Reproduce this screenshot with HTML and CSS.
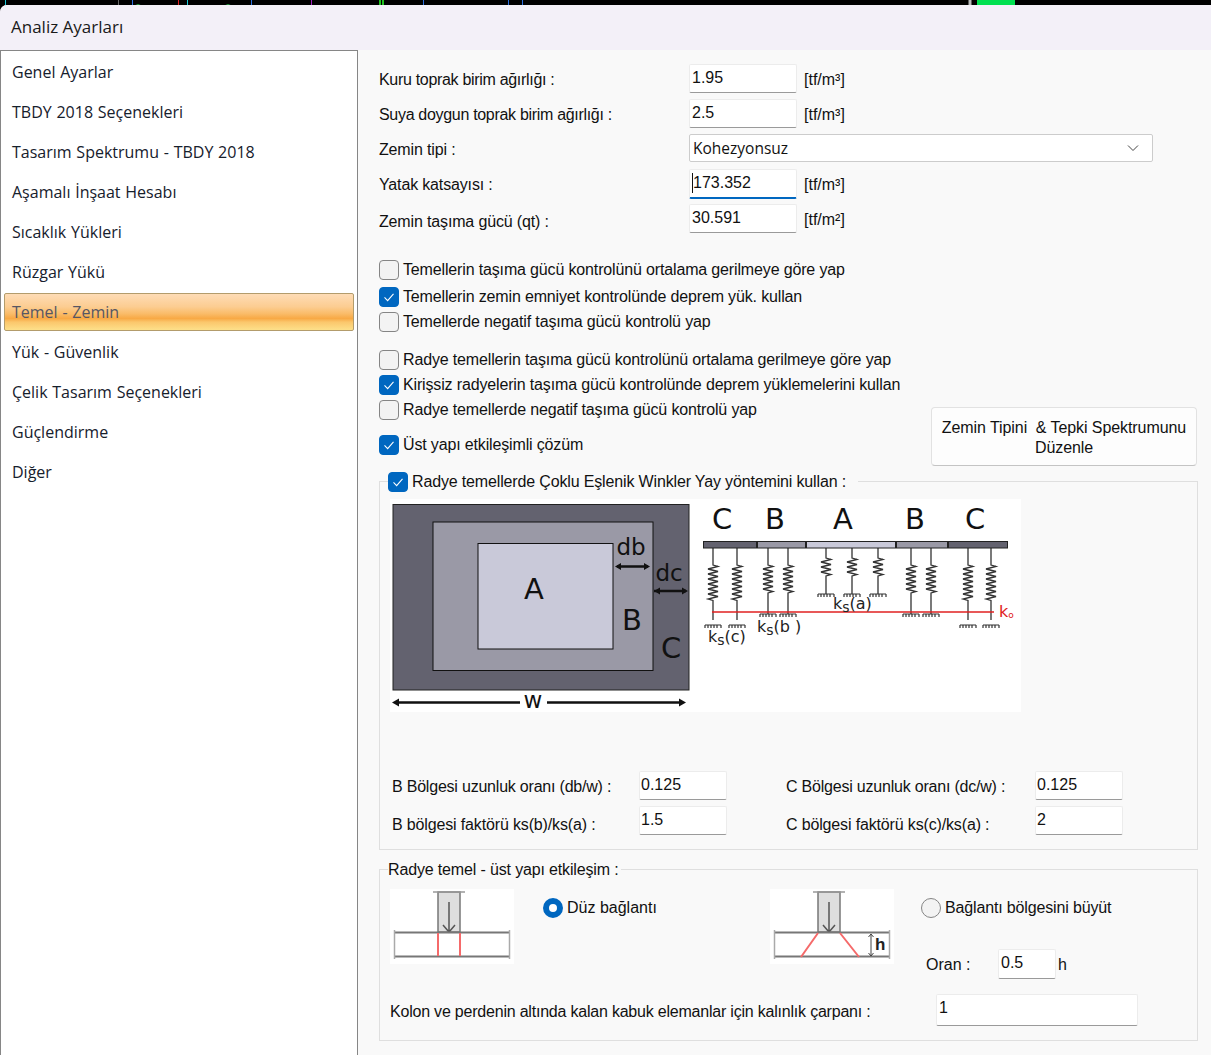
FILE: index.html
```html
<!DOCTYPE html>
<html lang="tr">
<head>
    <meta charset="UTF-8">
    <meta name="viewport" content="width=device-width, initial-scale=1.0">
    <title>Analiz Ayarları</title>
    <link rel="stylesheet" href="styles.css">
</head>
<body>
    <svg class="strip" width="1211" height="5" viewBox="0 0 1211 5">
        <path d="M5.500 0v5" stroke="#19c8d8"/>
        <path d="M118.500 0v5" stroke="#666"/>
        <path d="M132.500 0v5" stroke="#2a6fe0"/>
        <path d="M178.500 0v5" stroke="#e02020"/>
        <path d="M187.500 0v5" stroke="#19c8d8"/>
        <path d="M251.500 0v5" stroke="#2a6fe0"/>
        <path d="M311.500 0v5" stroke="#a020c0"/>
        <path d="M380 0v5M383 0v5" stroke="#20c020" stroke-width="2"/>
        <path d="M134 6q4-3 8 0M224 6q4-3 8 0" stroke="#20a040" fill="none"/>
        <path d="M423.500 0v5M508.500 0v5M522.500 0v5" stroke="#2a6fe0"/>
        <path d="M970 0v5" stroke="#bbb" stroke-width="3"/>
        <rect x="977" width="38" height="5" fill="#00e050"/>
    </svg>

    <div class="dialog">
        <div class="titlebar">Analiz Ayarları</div>
        <div class="dialog-body">
            <ul class="sidebar">
                <li class="side-item">Genel Ayarlar</li>
                <li class="side-item">TBDY 2018 Seçenekleri</li>
                <li class="side-item">Tasarım Spektrumu - TBDY 2018</li>
                <li class="side-item">Aşamalı İnşaat Hesabı</li>
                <li class="side-item">Sıcaklık Yükleri</li>
                <li class="side-item">Rüzgar Yükü</li>
                <li class="side-item active">Temel - Zemin</li>
                <li class="side-item">Yük - Güvenlik</li>
                <li class="side-item">Çelik Tasarım Seçenekleri</li>
                <li class="side-item">Güçlendirme</li>
                <li class="side-item">Diğer</li>
            </ul>

            <div class="content">
                <div class="soil-form">
                    <div class="form-row">
                        <span class="form-label tight">Kuru toprak birim ağırlığı :</span>
                        <div class="field field-main">1.95</div>
                        <span class="unit">[tf/m³]</span>
                    </div>
                    <div class="form-row">
                        <span class="form-label tight">Suya doygun toprak birim ağırlığı :</span>
                        <div class="field field-main">2.5</div>
                        <span class="unit">[tf/m³]</span>
                    </div>
                    <div class="form-row">
                        <span class="form-label">Zemin tipi :</span>
                        <div class="combo">
                            <span>Kohezyonsuz</span>
                            <svg width="12" height="8" viewBox="0 0 12 8"><path d="M1 1.500l5 5 5-5" fill="none" stroke="#444" stroke-width="1"/></svg>
                        </div>
                    </div>
                    <div class="form-row">
                        <span class="form-label">Yatak katsayısı :</span>
                        <div class="field field-main focused"><span class="caret"></span>173.352</div>
                        <span class="unit">[tf/m³]</span>
                    </div>
                    <div class="form-row">
                        <span class="form-label label-low">Zemin taşıma gücü (qt) :</span>
                        <div class="field field-main">30.591</div>
                        <span class="unit">[tf/m²]</span>
                    </div>
                </div>

                <div class="options">
                    <div class="check-list">
                        <label class="check check-loose"><span class="box"></span>Temellerin taşıma gücü kontrolünü ortalama gerilmeye göre yap</label>
                        <label class="check"><span class="box on"><svg viewBox="0 0 20 20"><path d="M5 10.500l3.500 3.500 6.500-7.500"/></svg></span>Temellerin zemin emniyet kontrolünde deprem yük. kullan</label>
                        <label class="check"><span class="box"></span>Temellerde negatif taşıma gücü kontrolü yap</label>
                        <label class="check check-sep"><span class="box"></span>Radye temellerin taşıma gücü kontrolünü ortalama gerilmeye göre yap</label>
                        <label class="check"><span class="box on"><svg viewBox="0 0 20 20"><path d="M5 10.500l3.500 3.500 6.500-7.500"/></svg></span>Kirişsiz radyelerin taşıma gücü kontrolünde deprem yüklemelerini kullan</label>
                        <label class="check"><span class="box"></span>Radye temellerde negatif taşıma gücü kontrolü yap</label>
                        <label class="check check-last"><span class="box on"><svg viewBox="0 0 20 20"><path d="M5 10.500l3.500 3.500 6.500-7.500"/></svg></span>Üst yapı etkileşimli çözüm</label>
                    </div>
                    <div class="spectrum-btn">Zemin Tipini &nbsp;&amp; Tepki Spektrumunu Düzenle</div>
                </div>

                <fieldset class="group group-winkler">
                    <legend class="group-legend">
                        <label class="check"><span class="box on"><svg viewBox="0 0 20 20"><path d="M5 10.500l3.500 3.500 6.500-7.500"/></svg></span>Radye temellerde Çoklu Eşlenik Winkler Yay yöntemini kullan :</label>
                    </legend>

                    <svg class="winkler-img" width="631" height="213" viewBox="390 499 631 213">
                        <defs>
                            <path id="zig-long" d="M0 0v17l5 1.500-10 2.500 10 2.500-10 2.500 10 2.500-10 2.500 10 2.500-10 2.500 10 2.500-10 2.500 10 2.500-10 2.500 10 2.500-10 2.500 5 1.500v19.500" fill="none" stroke="#333" stroke-width="1.300"/>
                            <path id="zig-mid" d="M0 0v17l5 1.500-10 2.500 10 2.500-10 2.500 10 2.500-10 2.500 10 2.500-10 2.500 10 2.500-10 2.500 10 2.500-5 1.500v21" fill="none" stroke="#333" stroke-width="1.300"/>
                            <path id="zig-short" d="M0 0v10l5 1.500-10 2.500 10 2.500-10 2.500 10 2.500-10 2.500 10 2.500-5 1.500v18" fill="none" stroke="#333" stroke-width="1.300"/>
                            <path id="ground" d="M-8 0h16M-8 0v3M-5 0v3M-2 0v3M1 0v3M4 0v3M8 0v3" fill="none" stroke="#333" stroke-width="1.200"/>
                        </defs>
                        <rect x="390" y="499" width="631" height="213" fill="#fff"/>

                        <rect x="393" y="504.500" width="296" height="185.500" fill="#63626f" stroke="#222" stroke-width="1"/>
                        <rect x="433" y="522" width="220" height="148.500" fill="#9a99a6" stroke="#111" stroke-width="1"/>
                        <rect x="478" y="543.500" width="135" height="105.500" fill="#c9c9d9" stroke="#111" stroke-width="1"/>
                        <text class="dia-big" x="534" y="599" text-anchor="middle">A</text>
                        <text class="dia-big" x="632" y="630" text-anchor="middle">B</text>
                        <text class="dia-big" x="671" y="658" text-anchor="middle">C</text>
                        <text class="dia-mid" x="631" y="555" text-anchor="middle">db</text>
                        <text class="dia-mid" x="669" y="581" text-anchor="middle">dc</text>
                        <path d="M617 566.500h31M654 591h32M396 702.500h124M547 702.500h136" stroke="#111" stroke-width="2.500" fill="none"/>
                        <path d="M615 566.500l6-3.500v7zM650 566.500l-6-3.500v7zM654 591l6-3.500v7zM688 591l-6-3.500v7zM392 702.500l7-4v8zM686 702.500l-7-4v8z" fill="#111"/>
                        <text class="dia-mid" x="533" y="708" text-anchor="middle">w</text>

                        <text class="dia-big" x="722" y="529" text-anchor="middle">C</text>
                        <text class="dia-big" x="775" y="529" text-anchor="middle">B</text>
                        <text class="dia-big" x="843" y="529" text-anchor="middle">A</text>
                        <text class="dia-big" x="915" y="529" text-anchor="middle">B</text>
                        <text class="dia-big" x="975" y="529" text-anchor="middle">C</text>

                        <use href="#zig-long" x="713" y="548"/>
                        <use href="#zig-long" x="737" y="548"/>
                        <use href="#zig-mid" x="768" y="548"/>
                        <use href="#zig-mid" x="788" y="548"/>
                        <use href="#zig-short" x="826" y="548"/>
                        <use href="#zig-short" x="852" y="548"/>
                        <use href="#zig-short" x="878" y="548"/>
                        <use href="#zig-mid" x="911" y="548"/>
                        <use href="#zig-mid" x="931" y="548"/>
                        <use href="#zig-long" x="968" y="548"/>
                        <use href="#zig-long" x="991" y="548"/>
                        <use href="#ground" x="713" y="625"/>
                        <use href="#ground" x="737" y="625"/>
                        <use href="#ground" x="768" y="614"/>
                        <use href="#ground" x="788" y="614"/>
                        <use href="#ground" x="826" y="594"/>
                        <use href="#ground" x="852" y="594"/>
                        <use href="#ground" x="878" y="594"/>
                        <use href="#ground" x="911" y="614"/>
                        <use href="#ground" x="931" y="614"/>
                        <use href="#ground" x="968" y="625"/>
                        <use href="#ground" x="991" y="625"/>

                        <rect x="703" y="541" width="305" height="7.500" fill="#222"/>
                        <rect x="704" y="542" width="52" height="5.500" fill="#63626f"/>
                        <rect x="758" y="542" width="47" height="5.500" fill="#9a99a6"/>
                        <rect x="807" y="542" width="88" height="5.500" fill="#c9c9d9"/>
                        <rect x="897" y="542" width="50" height="5.500" fill="#9a99a6"/>
                        <rect x="949" y="542" width="58" height="5.500" fill="#63626f"/>
                        <path d="M712 612h282" stroke="#e02020" stroke-width="1.300"/>

                        <text class="dia-small" x="708" y="642">k<tspan class="dia-sub" dy="3">s</tspan><tspan dy="-3">(c)</tspan></text>
                        <text class="dia-small" x="757" y="632">k<tspan class="dia-sub" dy="3">s</tspan><tspan dy="-3">(b )</tspan></text>
                        <text class="dia-small" x="833" y="609">k<tspan class="dia-sub" dy="3">s</tspan><tspan dy="-3">(a)</tspan></text>
                        <text class="dia-small dia-red" x="999" y="617">k<tspan class="dia-sub-o" dy="1">o</tspan></text>
                    </svg>

                    <div class="ratio-grid">
                        <span class="form-label tight-soft">B Bölgesi uzunluk oranı (db/w) :</span>
                        <div class="field">0.125</div>
                        <span class="form-label tight-soft">C Bölgesi uzunluk oranı (dc/w) :</span>
                        <div class="field">0.125</div>
                        <span class="form-label label-low">B bölgesi faktörü ks(b)/ks(a) :</span>
                        <div class="field">1.5</div>
                        <span class="form-label label-low">C bölgesi faktörü ks(c)/ks(a) :</span>
                        <div class="field">2</div>
                    </div>
                </fieldset>

                <fieldset class="group group-link">
                    <legend class="group-legend plain">Radye temel - üst yapı etkileşim :</legend>

                    <div class="link-row">
                        <svg class="link-img" width="124" height="75" viewBox="0 0 124 75">
                            <rect width="124" height="75" fill="#fff"/>
                            <rect x="48" y="3" width="22" height="40" fill="#dedede" stroke="#777" stroke-width="1.500"/>
                            <path d="M43 3h32" stroke="#999" stroke-width="1.500"/>
                            <path d="M59 13v29M53 36l6 7 6-7" fill="none" stroke="#555" stroke-width="1.500"/>
                            <path d="M4 43.500h116M4 67.500h116" stroke="#777" stroke-width="2"/>
                            <path d="M4.500 41v29M119.500 41v29" stroke="#aaa" stroke-width="1.500"/>
                            <path d="M48 44v23M70 44v23" stroke="#f56a6a" stroke-width="2"/>
                        </svg>
                        <label class="radio radio-flat"><span class="dot on"></span>Düz bağlantı</label>
                        <svg class="link-img img-grow" width="124" height="75" viewBox="0 0 124 75">
                            <rect width="124" height="75" fill="#fff"/>
                            <rect x="48" y="3" width="22" height="40" fill="#dedede" stroke="#777" stroke-width="1.500"/>
                            <path d="M43 3h32" stroke="#999" stroke-width="1.500"/>
                            <path d="M59 13v29M53 36l6 7 6-7" fill="none" stroke="#555" stroke-width="1.500"/>
                            <path d="M4 43.500h116M4 67.500h116" stroke="#777" stroke-width="2"/>
                            <path d="M4.500 41v29M119.500 41v29" stroke="#aaa" stroke-width="1.500"/>
                            <path d="M48 44l-17 24M70 44l19 24" stroke="#f56a6a" stroke-width="2"/>
                            <path d="M101 45v22M98.500 48l2.500-3 2.500 3M98.500 64l2.500 3 2.500-3" fill="none" stroke="#444"/>
                            <text class="h-mark" x="105" y="61">h</text>
                        </svg>
                        <div class="grow-col">
                            <label class="radio"><span class="dot"></span>Bağlantı bölgesini büyüt</label>
                            <div class="oran-row">
                                <span class="oran-label">Oran :</span>
                                <div class="field field-oran">0.5</div>
                                <span class="oran-h">h</span>
                            </div>
                        </div>
                    </div>

                    <div class="thick-row">
                        <span class="thick-label tight-soft">Kolon ve perdenin altında kalan kabuk elemanlar için kalınlık çarpanı :</span>
                        <div class="field field-thick">1</div>
                    </div>
                </fieldset>
            </div>
        </div>
    </div>
</body>
</html>
```

FILE: styles.css
```css
* {
    box-sizing: border-box;
}
html, body {
    height: 100%;
}
body {
    margin: 0;
    background-color: #000;
    font-family: "Liberation Sans", Arial, sans-serif;
    font-size: 16px;
    letter-spacing: -0.15px;
    color: #111;
    overflow: hidden;
}
.strip {
    display: block;
    height: 5px;
}
.dialog {
    height: 1050px;
    display: flex;
    flex-direction: column;
    background-color: #f9f9f9;
    border-top-left-radius: 7px;
    overflow: hidden;
}
.titlebar {
    height: 45px;
    flex: none;
    padding: 12px 0 0 11px;
    background-color: #f3f0f8;
    font-family: "Open Sans", sans-serif;
    font-size: 17px;
    letter-spacing: 0;
    line-height: 20px;
    color: #1a1a1a;
}
.dialog-body {
    flex: 1;
    display: flex;
    min-height: 0;
}

/* left list */
.sidebar {
    width: 358px;
    flex: none;
    margin: 0;
    padding: 1px 3px 0 3px;
    list-style: none;
    background-color: #fff;
    border: 1px solid #868686;
    border-bottom: none;
    font-family: "Open Sans", sans-serif;
    font-size: 16px;
    letter-spacing: 0;
    word-spacing: 0.6px;
}
.side-item {
    height: 40px;
    line-height: 40px;
    padding-left: 8px;
    color: #16202c;
}
.side-item.active {
    height: 38px;
    margin: 1px 0;
    line-height: 36px;
    padding-left: 7px;
    color: #565663;
    border: 1px solid #b39c6c;
    border-radius: 2px;
    background: linear-gradient(#fedcb6 0%, #fccd92 35%, #fabb68 55%, #f8a945 68%, #fbc76c 78%, #fde08a 100%);
}

/* right side */
.content {
    flex: 1;
    padding: 14px 13px 0 21px;
    min-width: 0;
}
.form-row {
    display: flex;
    align-items: center;
    height: 29px;
    margin-bottom: 6px;
}
.form-label {
    white-space: nowrap;
}
.form-row .form-label {
    width: 310px;
    padding-top: 2px;
}
.form-row .label-low {
    padding-top: 7px;
}
.tight {
    letter-spacing: -0.31px;
}
.tight-soft {
    letter-spacing: -0.21px;
}
.field {
    height: 29px;
    padding: 3px 0 0 1px;
    line-height: 20px;
    letter-spacing: 0;
    background-color: #fff;
    border: 1px solid #ececec;
    border-bottom: 1px solid #9a9a9a;
    border-radius: 2px;
}
.field-main {
    width: 108px;
    flex: none;
    padding-left: 2px;
}
.focused {
    height: 30px;
    border-bottom: 2px solid #0067c0;
}
.caret {
    display: inline-block;
    width: 1px;
    height: 20px;
    vertical-align: top;
    background-color: #111;
}
.unit {
    margin-left: 7px;
    padding-top: 2px;
    letter-spacing: 0;
}
.combo {
    width: 464px;
    height: 28px;
    align-self: flex-start;
    display: flex;
    align-items: center;
    justify-content: space-between;
    padding: 0 13px 0 3px;
    background-color: #fff;
    border: 1px solid #ccc;
    border-radius: 2px;
    font-family: "Open Sans", sans-serif;
    font-size: 15.500px;
    letter-spacing: 0;
}
.options {
    display: flex;
    align-items: flex-end;
    justify-content: space-between;
    margin-top: 27px;
}
.check-list {
    display: flex;
    flex-direction: column;
    gap: 5px;
    padding-bottom: 11px;
}
.check {
    display: flex;
    align-items: center;
    gap: 4px;
    height: 20px;
    white-space: nowrap;
}
.check-loose {
    margin-bottom: 2px;
}
.check-sep {
    margin-top: 13px;
}
.check-last {
    margin-top: 10px;
}
.box {
    width: 20px;
    height: 20px;
    flex: none;
    background-color: #f3f3f3;
    border: 1px solid #858585;
    border-radius: 4px;
}
.box.on {
    background-color: #0067c0;
    border-color: #0067c0;
}
.box svg {
    display: block;
    width: 18px;
    height: 18px;
}
.box path {
    fill: none;
    stroke: #fff;
    stroke-width: 1.200;
}
.spectrum-btn {
    width: 266px;
    height: 59px;
    margin-right: 1px;
    padding: 10px 8px 0;
    line-height: 20px;
    letter-spacing: -0.08px;
    text-align: center;
    background-color: #fdfdfd;
    border: 1px solid #e2e2e2;
    border-bottom-color: #c4c4c4;
    border-radius: 4px;
}

/* group boxes */
.group {
    margin: 0;
    padding: 0;
    min-width: 0;
    border: 1px solid #dfdfdf;
}
.group-legend {
    height: 18px;
    margin-left: -2px;
    padding: 0 12px 0 0;
}
.group-legend.plain {
    line-height: 20px;
    padding: 0 2px 0 0;
}
.group-winkler {
    margin-top: 6px;
    height: 378px;
    padding: 9px 0 0 10px;
}
.winkler-img {
    display: block;
}
.ratio-grid {
    display: grid;
    grid-template-columns: 247px 147px 249px 88px;
    grid-auto-rows: 29px;
    row-gap: 6px;
    align-items: center;
    margin-top: 59px;
    margin-left: 2px;
}
.ratio-grid .field {
    width: 88px;
}
.ratio-grid .form-label {
    padding-top: 2px;
}
.ratio-grid .label-low {
    padding-top: 8px;
}
.group-link {
    margin-top: 10px;
    height: 181px;
    padding: 11px 0 0 10px;
}
.link-row {
    display: flex;
    align-items: flex-start;
}
.link-img {
    display: block;
    flex: none;
}
.radio {
    display: flex;
    align-items: center;
    gap: 4px;
    height: 20px;
    margin-top: 9px;
    white-space: nowrap;
}
.radio-flat {
    width: 227px;
    margin-left: 29px;
    letter-spacing: 0;
}
.dot {
    width: 20px;
    height: 20px;
    flex: none;
    border: 1px solid #858585;
    border-radius: 50%;
    background-color: #f3f3f3;
}
.dot.on {
    border: 6px solid #0067c0;
    background-color: #fff;
}
.grow-col {
    margin-left: 27px;
}
.oran-row {
    display: flex;
    align-items: center;
    margin: 31px 0 0 5px;
    letter-spacing: 0;
}
.oran-label {
    width: 72px;
    padding-top: 2px;
}
.oran-h {
    padding-top: 2px;
}
.field-oran {
    width: 58px;
    height: 30px;
    margin-right: 2px;
    padding-left: 2px;
}
.thick-row {
    display: flex;
    align-items: center;
    justify-content: space-between;
    margin: 15px 59px 0 0;
}
.thick-label {
    padding-top: 4px;
}
.field-thick {
    width: 202px;
    height: 32px;
    padding-left: 2px;
}

/* drawings */
.dia-big {
    font-family: "DejaVu Sans", sans-serif;
    font-size: 29px;
    letter-spacing: 0;
    fill: #111;
}
.dia-mid {
    font-family: "DejaVu Sans", sans-serif;
    font-size: 23px;
    letter-spacing: 0;
    fill: #111;
}
.dia-small {
    font-family: "DejaVu Sans", sans-serif;
    font-size: 16px;
    letter-spacing: 0;
    fill: #222;
}
.dia-sub {
    font-size: 14px;
}
.dia-sub-o {
    font-size: 9px;
}
.dia-red {
    fill: #e02020;
}
.h-mark {
    font-family: "Liberation Sans", sans-serif;
    font-size: 17px;
    font-weight: bold;
    letter-spacing: 0;
    fill: #222;
}
```
